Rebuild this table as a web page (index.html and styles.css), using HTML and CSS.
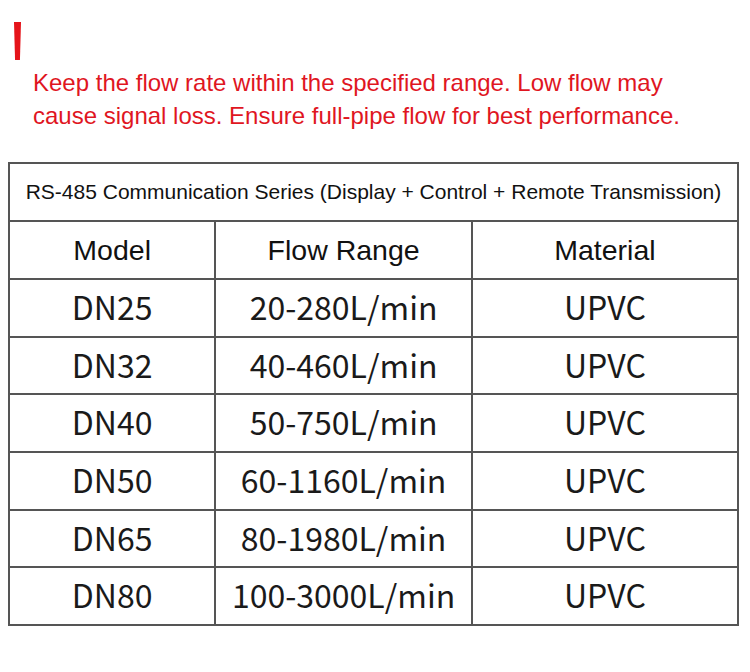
FILE: index.html
```html
<!DOCTYPE html>
<html>
<head>
<meta charset="utf-8">
<link rel="stylesheet" href="styles.css">
</head>
<body>
<div class="page">
  <div class="notice">
    <div class="mark"></div>
    <p class="warn">Keep the flow rate within the specified range. Low flow may<br>cause signal loss. Ensure full-pipe flow for best performance.</p>
  </div>
  <table class="spec">
    <colgroup>
      <col class="c1"><col class="c2"><col class="c3">
    </colgroup>
    <tr><td class="caption" colspan="3">RS-485 Communication Series (Display + Control + Remote Transmission)</td></tr>
    <tr class="head"><td>Model</td><td>Flow Range</td><td>Material</td></tr>
    <tr class="row"><td>DN25</td><td>20-280L/min</td><td>UPVC</td></tr>
    <tr class="row"><td>DN32</td><td>40-460L/min</td><td>UPVC</td></tr>
    <tr class="row"><td>DN40</td><td>50-750L/min</td><td>UPVC</td></tr>
    <tr class="row"><td>DN50</td><td>60-1160L/min</td><td>UPVC</td></tr>
    <tr class="row"><td>DN65</td><td>80-1980L/min</td><td>UPVC</td></tr>
    <tr class="row"><td>DN80</td><td>100-3000L/min</td><td>UPVC</td></tr>
  </table>
</div>
</body>
</html>
```

FILE: styles.css
```css
html, body {
  margin: 0;
  padding: 0;
  background: #ffffff;
}
.page {
  width: 750px;
  height: 672px;
  padding: 22px 0 0 8px;
  box-sizing: border-box;
}
.notice {
  display: flex;
  flex-direction: column;
}
.mark {
  width: 7px;
  height: 38px;
  margin-left: 6px;
  background: #e5141a;
  clip-path: polygon(0 0, 100% 0, 85% 100%, 15% 100%);
}
.warn {
  margin: 6px 0 0 25px;
  font-family: "Liberation Sans", Arial, sans-serif;
  font-size: 24px;
  line-height: 33px;
  color: #e0161f;
}
.spec {
  margin-top: 30px;
  width: 731px;
  border-collapse: collapse;
  font-family: "Liberation Sans", Arial, sans-serif;
  color: #111;
}
.c1 { width: 207px; }
.c2 { width: 257px; }
.c3 { width: 267px; }
.spec td {
  border: 2px solid #555;
  text-align: center;
  padding: 0;
}
.caption {
  height: 56px;
  font-size: 21px;
}
.head td {
  height: 56px;
  font-size: 28.5px;
}
.row td {
  height: 51.7px;
  padding-bottom: 4px;
  font-family: "Noto Sans CJK SC", "Noto Sans", sans-serif;
  font-size: 32px;
  color: #1a1a1a;
}
```
